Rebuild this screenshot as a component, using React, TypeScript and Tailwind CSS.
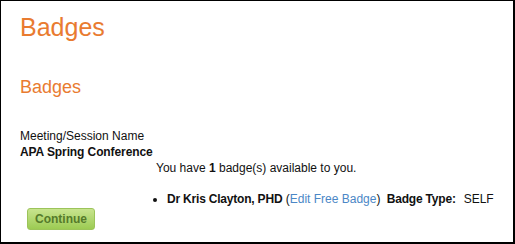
export default function App() {
  return (
    <div className="w-[515px] h-[244px] bg-white border-t border-l border-r-2 border-b-2 border-black font-['Liberation_Sans',Arial,sans-serif] text-[#111]">
      <div className="pl-[19px]">
        <h1 className="pt-[11px] text-[25px] leading-[30px] text-[#e97b30]">Badges</h1>
        <h2 className="mt-[34px] text-[18px] leading-[22px] text-[#e97b30]">Badges</h2>
        <div className="mt-[30px] text-[12px] leading-[16px]">
          <div>Meeting/Session Name</div>
          <div className="font-bold tracking-[-0.1px]">APA Spring Conference</div>
          <div className="flex">
            <div className="w-[136px] shrink-0" />
            <div>
              <p>
                You have <b>1</b> badge(s) available to you.
              </p>
              <ul className="mt-[15px] pl-[11px] list-disc">
                <li>
                  <b className="tracking-[-0.2px]">Dr Kris Clayton, PHD</b>{' '}
                  (<a href="#" className="text-[#4b87c6]">Edit Free Badge</a>){' '}
                  <b className="ml-[3px] tracking-[-0.2px]">Badge Type:</b>
                  <span className="ml-[8px]">SELF</span>
                </li>
              </ul>
            </div>
          </div>
          <button className="mt-[1px] ml-[7px] w-[68px] h-[22px] rounded-[3px] border border-[#9cc45a] bg-gradient-to-b from-[#c8e48e] to-[#9ccb52] text-[12px] font-bold text-[#557a2a]">
            Continue
          </button>
        </div>
      </div>
    </div>
  );
}
